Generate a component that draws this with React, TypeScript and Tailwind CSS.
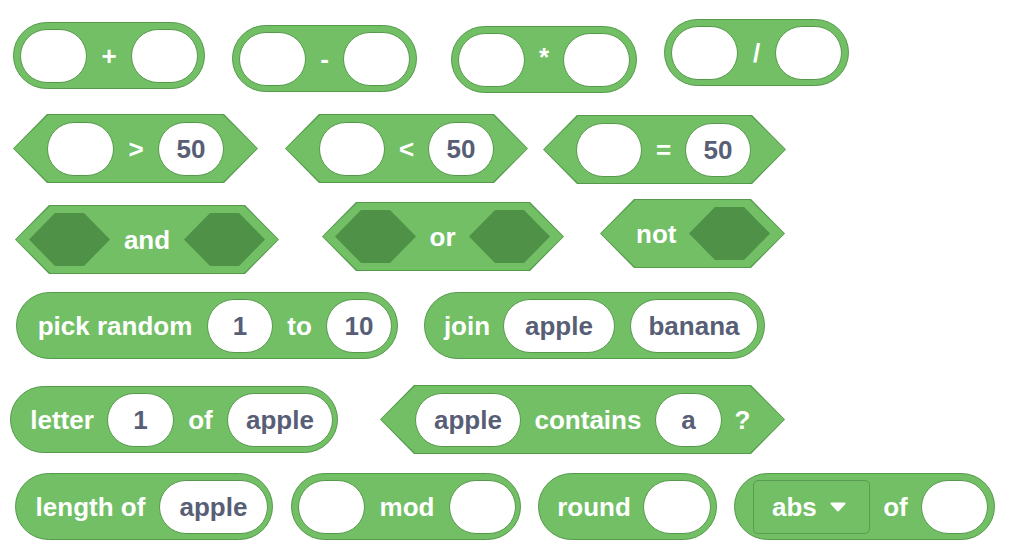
import React from "react";

const HEX = "[clip-path:polygon(34px_0,calc(100%_-_34px)_0,100%_50%,calc(100%_-_34px)_100%,34px_100%,0_50%)]";
const SLOT_HEX = "[clip-path:polygon(26px_0,calc(100%_-_26px)_0,100%_50%,calc(100%_-_26px)_100%,26px_100%,0_50%)]";

type Props = { className?: string; children?: React.ReactNode };

const Reporter = ({ className = "", children }: Props) => (
  <div className={`flex h-[67px] shrink-0 items-center rounded-full border border-[#55994b] bg-[#72bf66] ${className}`}>
    {children}
  </div>
);

const Predicate = ({ className = "", children }: Props) => (
  <div className={`relative flex h-[69px] shrink-0 items-center ${className}`}>
    <div className={`absolute inset-0 bg-[#55994b] ${HEX}`} />
    <div className={`absolute inset-[1px] bg-[#72bf66] ${HEX}`} />
    <div className="relative flex h-full items-center">{children}</div>
  </div>
);

const Slot = ({ className = "w-[67px]", children }: Props) => (
  <div
    className={`flex h-[54px] shrink-0 items-center justify-center rounded-full border border-[#55994b] bg-white text-[#575e75] ${className}`}
  >
    {children}
  </div>
);

const BoolSlot = () => <div className={`h-[53px] w-[81px] shrink-0 bg-[#4f9146] ${SLOT_HEX}`} />;

const Label = ({ className = "", children }: Props) => (
  <span className={`shrink-0 whitespace-nowrap text-center text-white ${className}`}>{children}</span>
);

const Caret = () => (
  <svg width="16" height="10" viewBox="0 0 16 10" className="shrink-0">
    <path d="M1.5 1.5 L14.5 1.5 L8 8.5 Z" fill="white" stroke="white" strokeWidth="2" strokeLinejoin="round" />
  </svg>
);

export default function App() {
  return (
    <div className="relative h-[558px] w-[1010px] overflow-hidden bg-white pt-[19px] font-['Liberation_Sans',Arial,sans-serif] text-[26px] font-bold leading-none">
      {/* arithmetic */}
      <div className="flex h-[95px] items-start">
        <Reporter className="ml-[13px] mt-[3px] pl-[6px] pr-[6px]">
          <Slot />
          <Label className="w-[44px]">+</Label>
          <Slot />
        </Reporter>
        <Reporter className="ml-[27px] mt-[6px] pl-[6px] pr-[6px]">
          <Slot />
          <Label className="w-[37px]">-</Label>
          <Slot />
        </Reporter>
        <Reporter className="ml-[34px] mt-[7px] pl-[6px] pr-[6px]">
          <Slot />
          <Label className="-mt-[6px] w-[38px]">*</Label>
          <Slot />
        </Reporter>
        <Reporter className="ml-[27px] pl-[6px] pr-[6px]">
          <Slot />
          <Label className="w-[37px]">/</Label>
          <Slot />
        </Reporter>
      </div>

      {/* comparison */}
      <div className="flex h-[85px] items-start">
        <Predicate className="ml-[13px] pl-[34px] pr-[34px]">
          <Slot />
          <Label className="w-[44px]">&gt;</Label>
          <Slot className="w-[66px]">50</Slot>
        </Predicate>
        <Predicate className="ml-[27px] pl-[34px] pr-[34px]">
          <Slot className="w-[66px]" />
          <Label className="w-[43px]">&lt;</Label>
          <Slot className="w-[66px]">50</Slot>
        </Predicate>
        <Predicate className="ml-[15px] mt-[1px] pl-[33px] pr-[35px]">
          <Slot className="w-[66px]" />
          <Label className="w-[43px]">=</Label>
          <Slot className="w-[66px]">50</Slot>
        </Predicate>
      </div>

      {/* boolean logic */}
      <div className="flex h-[93px] items-start">
        <Predicate className="ml-[15px] mt-[6px] pl-[14px] pr-[14px]">
          <BoolSlot />
          <Label className="w-[74px]">and</Label>
          <BoolSlot />
        </Predicate>
        <Predicate className="ml-[43px] mt-[3px] pl-[13px] pr-[14px]">
          <BoolSlot />
          <Label className="w-[53px]">or</Label>
          <BoolSlot />
        </Predicate>
        <Predicate className="ml-[36px] pl-[36px] pr-[15px]">
          <Label className="w-[53px] text-left">not</Label>
          <BoolSlot />
        </Predicate>
      </div>

      {/* random, join */}
      <div className="flex h-[93px] items-start">
        <Reporter className="ml-[16px] pl-[6px] pr-[5px]">
          <Label className="w-[184px]">pick random</Label>
          <Slot className="w-[66px]">1</Slot>
          <Label className="w-[53px]">to</Label>
          <Slot className="w-[66px]">10</Slot>
        </Reporter>
        <Reporter className="ml-[26px] pl-[6px] pr-[6px]">
          <Label className="w-[72px]">join</Label>
          <Slot className="w-[112px]">apple</Slot>
          <Slot className="ml-[15px] w-[128px]">banana</Slot>
        </Reporter>
      </div>

      {/* letter, contains */}
      <div className="flex h-[88px] items-start">
        <Reporter className="ml-[10px] mt-[1px] pl-[6px] pr-[4px]">
          <Label className="w-[90px]">letter</Label>
          <Slot>1</Slot>
          <Label className="w-[53px]">of</Label>
          <Slot className="w-[106px]">apple</Slot>
        </Reporter>
        <Predicate className="ml-[42px] pl-[35px] pr-[22px]">
          <Slot className="w-[106px]">apple</Slot>
          <Label className="w-[134px]">contains</Label>
          <Slot>a</Slot>
          <Label className="w-[41px]">?</Label>
        </Predicate>
      </div>

      {/* length, mod, round, math op */}
      <div className="flex items-start">
        <Reporter className="ml-[15px] pl-[6px] pr-[4px]">
          <Label className="w-[137px]">length of</Label>
          <Slot className="w-[109px]">apple</Slot>
        </Reporter>
        <Reporter className="ml-[18px] pl-[6px] pr-[4px]">
          <Slot />
          <Label className="w-[84px]">mod</Label>
          <Slot />
        </Reporter>
        <Reporter className="ml-[17px] pl-[6px] pr-[5px]">
          <Label className="w-[98px]">round</Label>
          <Slot className="w-[68px]" />
        </Reporter>
        <Reporter className="ml-[17px] pl-[18px] pr-[6px]">
          <div className="flex h-[54px] w-[117px] shrink-0 items-center gap-[13px] rounded-[5px] border border-[#5a9d50] bg-[#72bf66] pl-[18px]">
            <span className="text-white">abs</span>
            <Caret />
          </div>
          <Label className="w-[51px]">of</Label>
          <Slot />
        </Reporter>
      </div>
    </div>
  );
}
